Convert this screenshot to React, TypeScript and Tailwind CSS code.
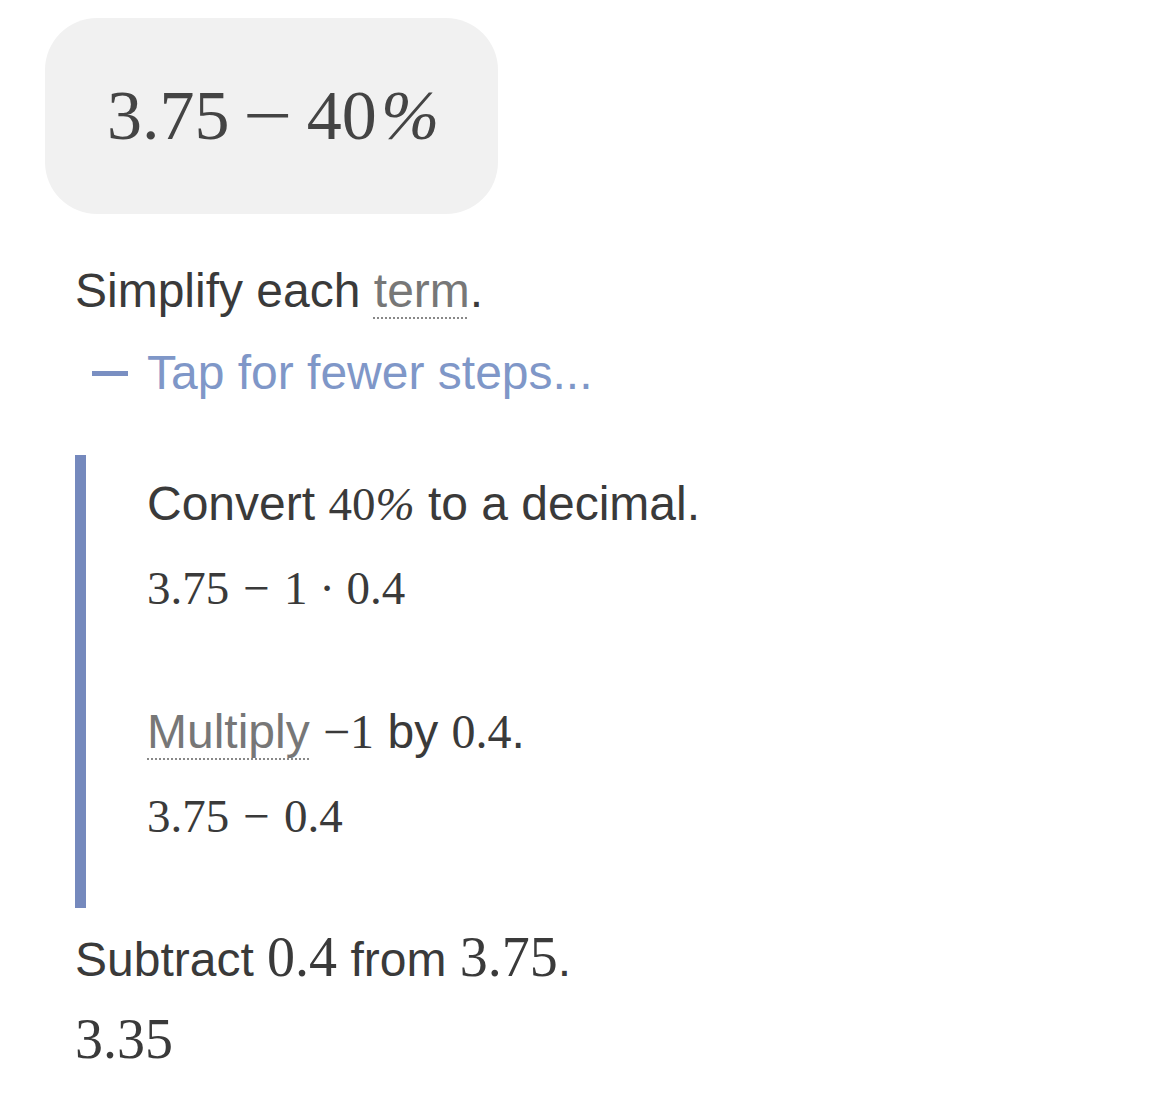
export default function App() {
  const sans = "font-['Liberation_Sans',Arial,sans-serif]";
  const serif = "font-['Liberation_Serif','Times_New_Roman',serif]";

  return (
    <div className={`h-[1098px] w-[1166px] bg-white pl-[45px] pt-[18px] text-[#3a3a3a] ${sans}`}>
      {/* PROBLEM */}
      <div className="flex h-[196px] w-[453px] items-center rounded-[52px] bg-[#f1f1f1] pl-[62px]">
        <span className={`${serif} text-[70px] leading-none text-[#444]`}>
          3.75<span className="mx-[0.27em] inline-block scale-x-125">−</span>40<span className="ml-[0.06em] italic">%</span>
        </span>
      </div>

      <div className="pl-[30px]">
        {/* STEP HEADER */}
        <div className="mt-[49px] text-[48px] leading-[56px]">
          Simplify each{" "}
          <span className="text-[#777] underline decoration-[#888] decoration-dotted decoration-2 underline-offset-[10px]">
            term
          </span>
          .
        </div>

        <div className="mt-[26px] flex items-center text-[48px] leading-[56px] text-[#7f97c8]">
          <div className="ml-[17px] mr-[19px] h-[5px] w-[36px] bg-[#7a8fc2]" />
          <span>Tap for fewer steps...</span>
        </div>

        {/* SUBSTEPS */}
        <div className="mt-[54px] flex">
          <div className="w-[11px] shrink-0 bg-[#7589bd]" />
          <div className="pb-[64px] pl-[61px] pt-[21px]">
            <div className="text-[48px] leading-[56px]">
              Convert <span className={`${serif} text-[47px]`}>40<span className="italic">%</span></span> to a decimal.
            </div>
            <div className={`mt-[28px] ${serif} text-[47px] leading-[56px]`}>
              3.75<span className="mx-[0.3em]">−</span>1<span className="mx-[0.25em]">·</span>0.4
            </div>

            <div className="mt-[88px] text-[48px] leading-[56px]">
              <span className="text-[#777] underline decoration-[#888] decoration-dotted decoration-2 underline-offset-[10px]">
                Multiply
              </span>{" "}
              <span className={`${serif}`}>−1</span> by <span className={`${serif}`}>0.4</span>.
            </div>
            <div className={`mt-[28px] ${serif} text-[47px] leading-[56px]`}>
              3.75<span className="mx-[0.3em]">−</span>0.4
            </div>
          </div>
        </div>

        {/* FINAL STEP */}
        <div className="mt-[21px] text-[48px] leading-[56px]">
          Subtract <span className={`${serif} text-[56px]`}>0.4</span> from{" "}
          <span className={`${serif} text-[56px]`}>3.75</span>.
        </div>
        <div className={`mt-[19px] ${serif} text-[56px] leading-[64px]`}>3.35</div>
      </div>
    </div>
  );
}
